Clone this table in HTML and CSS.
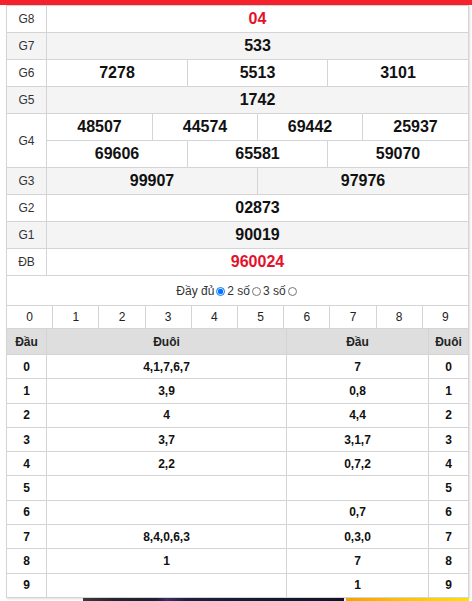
FILE: index.html
```html
<!DOCTYPE html>
<html lang="vi">
<head>
<meta charset="utf-8">
<title>KQXS</title>
<link rel="stylesheet" href="styles.css">
</head>
<body>
<div class="topbar"></div>
<div class="box">
  <div class="kq">
    <div class="lbl">G8</div>
    <div class="vals c1"><div class="v red">04</div></div>

    <div class="lbl alt">G7</div>
    <div class="vals c1 alt"><div class="v">533</div></div>

    <div class="lbl">G6</div>
    <div class="vals c3"><div class="v">7278</div><div class="v">5513</div><div class="v">3101</div></div>

    <div class="lbl alt">G5</div>
    <div class="vals c1 alt"><div class="v">1742</div></div>

    <div class="lbl tall">G4</div>
    <div class="vals c1">
      <div class="vals c4"><div class="v">48507</div><div class="v">44574</div><div class="v">69442</div><div class="v">25937</div></div>
      <div class="vals c3"><div class="v">69606</div><div class="v">65581</div><div class="v">59070</div></div>
    </div>

    <div class="lbl alt">G3</div>
    <div class="vals c2 alt"><div class="v">99907</div><div class="v">97976</div></div>

    <div class="lbl">G2</div>
    <div class="vals c1"><div class="v">02873</div></div>

    <div class="lbl alt">G1</div>
    <div class="vals c1 alt"><div class="v">90019</div></div>

    <div class="lbl">ĐB</div>
    <div class="vals c1"><div class="v red">960024</div></div>
  </div>

  <div class="opts">
    <span>Đầy đủ</span><input type="radio" name="opt" checked><span>2 số</span><input type="radio" name="opt"><span>3 số</span><input type="radio" name="opt">
  </div>

  <div class="digits">
    <span>0</span><span>1</span><span>2</span><span>3</span><span>4</span><span>5</span><span>6</span><span>7</span><span>8</span><span>9</span>
  </div>

  <div class="loto">
    <div class="h">Đầu</div><div class="h">Đuôi</div><div class="h">Đầu</div><div class="h">Đuôi</div>
    <div>0</div><div>4,1,7,6,7</div><div>7</div><div>0</div>
    <div>1</div><div>3,9</div><div>0,8</div><div>1</div>
    <div>2</div><div>4</div><div>4,4</div><div>2</div>
    <div>3</div><div>3,7</div><div>3,1,7</div><div>3</div>
    <div>4</div><div>2,2</div><div>0,7,2</div><div>4</div>
    <div>5</div><div></div><div></div><div>5</div>
    <div>6</div><div></div><div>0,7</div><div>6</div>
    <div>7</div><div>8,4,0,6,3</div><div>0,3,0</div><div>7</div>
    <div>8</div><div>1</div><div>7</div><div>8</div>
    <div>9</div><div></div><div>1</div><div>9</div>
  </div>
</div>
<div class="ads">
  <div class="ad1"></div>
  <div class="ad2"></div>
</div>
</body>
</html>
```
FILE: styles.css
```css
* { box-sizing: border-box; margin: 0; padding: 0; }

body {
  font-family: "Liberation Sans", Arial, sans-serif;
  background: #fff;
  color: #222;
  width: 472px;
  overflow: hidden;
}

.topbar {
  height: 5px;
  background: #f5222d;
}

.box {
  margin-left: 6px;
  width: 463px;
  border: 1px solid #d4d4d4;
  box-shadow: 1px 1px 2px rgba(0, 0, 0, 0.14);
  background: #fff;
}

.kq {
  display: grid;
  grid-template-columns: 39px 1fr;
  gap: 1px;
  background: #d4d4d4;
  border-bottom: 1px solid #d4d4d4;
}

.lbl {
  background: #fff;
  min-height: 26px;
  display: flex;
  align-items: center;
  justify-content: center;
  font-size: 12px;
  color: #333;
}

.vals {
  display: grid;
  gap: 1px;
  background: #d4d4d4;
}

.c1 { grid-template-columns: 1fr; }
.c2 { grid-template-columns: 1fr 1fr; }
.c3 { grid-template-columns: 140px 139px 140px; }
.c4 { grid-template-columns: 105px 104px 104px 105px; }

.v {
  background: #fff;
  height: 26px;
  display: flex;
  align-items: center;
  justify-content: center;
  font-weight: bold;
  font-size: 16px;
  color: #111;
}

.lbl.alt,
.alt .v {
  background: #f4f4f4;
}

.v.red {
  color: #e3122c;
}

.opts {
  height: 30px;
  border-bottom: 1px solid #d4d4d4;
  display: flex;
  align-items: center;
  justify-content: center;
  font-size: 12px;
  color: #333;
  padding-top: 1px;
}

.opts input {
  width: 9px;
  height: 9px;
  margin: 0 2px 0 2px;
}

.digits {
  display: grid;
  grid-template-columns: repeat(10, 1fr);
  gap: 1px;
  background: #d4d4d4;
  border-bottom: 1px solid #d4d4d4;
}

.digits span {
  background: #fff;
  height: 22px;
  display: flex;
  align-items: center;
  justify-content: center;
  font-size: 12px;
  color: #222;
}

.loto {
  display: grid;
  grid-template-columns: 39px 239px 141px 39px;
  grid-template-rows: 25px;
  grid-auto-rows: 23.3px;
  gap: 1px;
  background: #d4d4d4;
}

.loto div {
  background: #fff;
  display: flex;
  align-items: center;
  justify-content: center;
  font-size: 12px;
  font-weight: bold;
  color: #111;
}

.loto .h {
  background: #dedede;
  font-size: 12px;
  color: #222;
}

.ads {
  display: flex;
  height: 3px;
}

.ad1 {
  margin-left: 83px;
  width: 261px;
  background: linear-gradient(90deg, #3b3b3b 0, #23242e 12%, #1b1f38 28%, #3a2d63 32%, #1a2040 40%, #121a30 70%, #0e1626 100%);
}

.ad2 {
  margin-left: 2px;
  width: 123px;
  background: linear-gradient(90deg, #f5a200 0, #ffc400 50%, #ffe000 100%);
}
```
